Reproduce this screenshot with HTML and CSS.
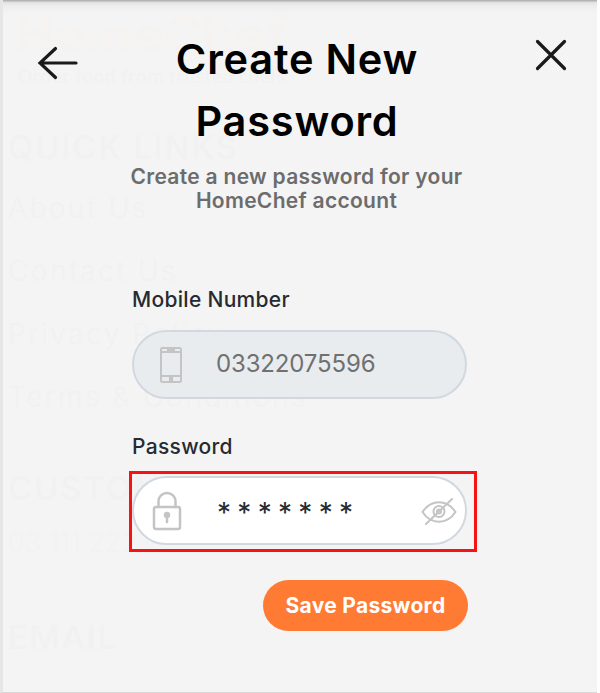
FILE: index.html
```html
<!DOCTYPE html>
<html lang="en">
<head>
<meta charset="utf-8">
<title>Create New Password</title>
<link rel="stylesheet" href="styles.css">
</head>
<body>
<div class="sheet">
  <div class="backdrop" aria-hidden="true">
    <div class="ghost logo">HomeChef</div>
    <div class="ghost tagline">Order food from trusted chefs</div>
    <div class="ghost heading">QUICK LINKS</div>
    <div class="ghost link">About Us</div>
    <div class="ghost link">Contact Us</div>
    <div class="ghost link">Privacy Policy</div>
    <div class="ghost link">Terms &amp; Conditions</div>
    <div class="ghost heading support">CUSTOMER</div>
    <div class="ghost phone-no">03 111 222</div>
    <div class="ghost heading mail">EMAIL</div>
  </div>
  <header class="top">
    <svg class="back" viewBox="0 0 42 36" width="42" height="36"><path d="M39 18H3M18.500 3.500L3 18L18.500 32.500"/></svg>
    <h1>Create New<br>Password</h1>
    <svg class="close" viewBox="0 0 34 34" width="34" height="34"><path d="M3.500 3.500L30.500 30.500M30.500 3.500L3.500 30.500"/></svg>
  </header>
  <p class="sub">Create a new password for your<br>HomeChef account</p>
  <form class="form">
    <label>Mobile Number</label>
    <div class="field disabled">
      <svg class="phone" viewBox="0 0 22 36" width="22" height="36"><rect x="1" y="1" width="20" height="34" rx="1.500"/><path d="M1 5H21M1 29H21"/><path class="solid" d="M7 1h8v4H7zM9 30h4v4H9z"/></svg>
      <span class="number">03322075596</span>
    </div>
    <label>Password</label>
    <div class="highlight">
      <div class="field">
        <svg class="lock" viewBox="0 0 30 40" width="30" height="40"><rect x="2" y="16" width="26" height="22" rx="2"/><path d="M6.500 16V10.500a8.500 8.500 0 0 1 17 0V16"/><circle class="solid" cx="15" cy="24" r="3.200"/><path d="M15 24V31"/></svg>
        <span class="stars">*******</span>
        <svg class="eye" viewBox="0 0 36 28" width="36" height="28"><path d="M1.500 15C10 2 26 2 34.500 15C26 28 10 28 1.500 15Z"/><circle cx="18" cy="14.500" r="5.500"/><circle cx="18" cy="14.500" r="2"/><path d="M5 27L31 2"/></svg>
      </div>
    </div>
    <button type="button">Save Password</button>
  </form>
</div>
</body>
</html>
```
FILE: styles.css
```css
* { box-sizing: border-box; }
body { margin: 0; background: #fdfdfd; font-family: Inter, "Liberation Sans", sans-serif; }
.sheet {
  position: relative; width: 597px; height: 693px; overflow: hidden;
  background: linear-gradient(#b4b4b4 0, #b4b4b4 1px, #dedede 2px, #ececec 5px, #f4f4f4 13px);
  border-left: 3px solid #e6e6e6; border-bottom: 1px solid #d8d8d8;
}
.backdrop { position: absolute; inset: 0; padding: 3px 0 0 5px; color: #f1f1f1; white-space: nowrap; }
.ghost { line-height: 63px; height: 63px; }
.logo { font-size: 50px; font-weight: 700; letter-spacing: 1.5px; color: #f4f3f1; padding-left: 7px; }
.tagline { font-family: "Open Sans", sans-serif; font-size: 18px; letter-spacing: .5px; height: 50px; line-height: 20px; padding-left: 10px; }
.heading { font-size: 33px; font-weight: 500; letter-spacing: 1.8px; }
.link { font-size: 28px; letter-spacing: 2.6px; font-weight: 300; line-height: 59px; }
.support { margin-top: 26px; }
.phone-no { height: 50px; line-height: 46px; font-size: 27px; font-weight: 300; color: #f4f2f0; }
.mail { margin-top: 36px; }
.top { position: relative; display: grid; grid-template-columns: 118px 1fr 122px; padding-top: 28px; }
.top svg, .field svg { fill: none; stroke-linecap: round; }
.top svg { stroke: #1a1a1a; stroke-width: 3.2; }
.back { margin: 17px 0 0 34px; }
.close { margin: 10px 0 0 59px; }
h1 { margin: 0; padding-right: 2px; text-align: center; font-size: 41.5px; line-height: 62px; font-weight: 600; color: #000; white-space: nowrap; letter-spacing: .8px; }
.sub { position: relative; margin: 13px 0 0; padding-right: 7px; text-align: center; font-size: 21px; line-height: 24px; font-weight: 600; color: #6c6c6c; letter-spacing: .3px; }
.form { position: relative; margin: 75px 0 0 130px; width: 335px; display: flex; flex-direction: column; }
label { margin-left: -1px; font-size: 21px; font-weight: 500; line-height: 24px; color: #272b30; white-space: nowrap; letter-spacing: .3px; }
.field { display: flex; align-items: center; height: 69px; border: 2px solid #d2d8df; border-radius: 35px; background: #fff; width: 335px; margin-left: -1px; }
.disabled { background: #e8ecef; margin-top: 18px; margin-bottom: 36px; }
.field svg { stroke: #c4c4c4; stroke-width: 2; flex: none; }
.field svg .solid { fill: #c4c4c4; stroke: none; }
.phone { margin-left: 26px; }
.number { margin-left: 34px; padding-bottom: 2px; font-size: 24px; color: #707070; letter-spacing: -.15px; }
.highlight { margin: 12px -9px 0 -4px; padding: 2px 0 4px 1px; border: 3px solid #f51313; height: 81px; }
.field .lock { margin-left: 18px; stroke-width: 2.5; }
.stars { margin-left: 35px; padding-top: 5px; flex: 1; font-size: 28px; letter-spacing: 6.3px; color: #272b30; }
.eye { margin-right: 8px; }
button { align-self: flex-end; margin: 28px 0 0; width: 205px; height: 51px; padding: 0; border: 0; border-radius: 26px; background: #ff7a33; color: #fff; font: 700 21px Inter, sans-serif; white-space: nowrap; letter-spacing: .3px; }
```
